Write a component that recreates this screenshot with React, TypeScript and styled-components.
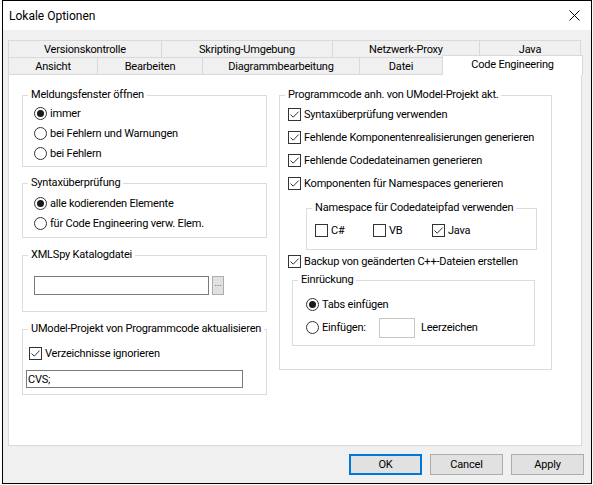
import React from "react";
import styled, { createGlobalStyle, css } from "styled-components";

const FONT = `Roboto, "Liberation Sans", Arial, sans-serif`;

const GlobalStyle = createGlobalStyle`
  html, body {
    margin: 0;
    padding: 0;
    background: #ffffff;
  }
  body {
    font-family: ${FONT};
    font-size: 11px;
    letter-spacing: -0.2px;
    color: #000000;
  }
  * {
    box-sizing: border-box;
  }
`;

const Screen = styled.div`
  width: 593px;
  height: 485px;
  padding-left: 2px;
`;

const Dialog = styled.div`
  width: 590px;
  height: 484px;
  border: 1px solid #000000;
  background: #f0f0f0;
  display: flex;
  flex-direction: column;
`;

const TitleBar = styled.div`
  height: 29px;
  flex: none;
  background: #ffffff;
  display: flex;
  align-items: center;
  justify-content: space-between;
  padding-left: 6px;
`;

const TitleText = styled.span`
  font-size: 12px;
  letter-spacing: 0;
`;

const CloseButton = styled.div`
  width: 34px;
  height: 29px;
  display: flex;
  align-items: center;
  justify-content: center;
`;

const Body = styled.div`
  flex: 1;
  display: flex;
  flex-direction: column;
  padding: 10px 7px 0 5px;
`;

const TabRow = styled.div`
  display: flex;
  align-items: flex-start;
  height: 17px;
`;

const Tab = styled.div<{ $w: number; $active?: boolean }>`
  width: ${(p) => p.$w}px;
  height: 17px;
  flex: none;
  margin-left: -1px;
  &:first-child {
    margin-left: 0;
  }
  border: 1px solid #d9d9d9;
  border-bottom: none;
  background: #f0f0f0;
  display: flex;
  align-items: center;
  justify-content: center;
  white-space: nowrap;
  ${(p) =>
    p.$active &&
    css`
      height: 20px;
      margin-top: -2px;
      margin-bottom: -1px;
      background: #ffffff;
      position: relative;
      z-index: 1;
      padding-bottom: 2px;
    `}
`;

const Panel = styled.div`
  width: 574px;
  height: 372px;
  flex: none;
  background: #ffffff;
  border: 1px solid #d9d9d9;
  display: grid;
  grid-template-columns: 245px 273px;
  column-gap: 12px;
  align-items: start;
  padding: 13px 0 0 13px;
`;

const Column = styled.div`
  display: flex;
  flex-direction: column;
`;

const GroupBox = styled.fieldset<{ $mt?: number; $ml?: number; $mr?: number }>`
  margin: ${(p) => p.$mt ?? 0}px ${(p) => p.$mr ?? 0}px 0 ${(p) => p.$ml ?? 0}px;
  padding: 0;
  min-width: 0;
  border: 1px solid #dcdcdc;
`;

const GroupTitle = styled.legend`
  margin-left: 5px;
  padding: 0 3px;
  height: 14px;
  line-height: 14px;
  white-space: nowrap;
`;

const GroupBody = styled.div<{ $pad: string }>`
  padding: ${(p) => p.$pad};
`;

const OptionRow = styled.label<{ $h?: number; $w?: number; $indent?: number }>`
  display: flex;
  align-items: center;
  gap: 3px;
  height: ${(p) => p.$h ?? 20}px;
  ${(p) => (p.$w ? `width: ${p.$w}px; flex: none;` : "")}
  margin-left: ${(p) => p.$indent ?? 0}px;
  white-space: nowrap;
`;

const InlineOptions = styled.div`
  display: flex;
`;

const Box = styled.span`
  width: 13px;
  height: 13px;
  flex: none;
  border: 1px solid #333333;
  background: #ffffff;
  display: inline-flex;
  align-items: center;
  justify-content: center;
`;

const Circle = styled.span<{ $on: boolean }>`
  width: 13px;
  height: 13px;
  flex: none;
  border-radius: 50%;
  border: 1px solid #333333;
  background: #ffffff;
  display: inline-flex;
  align-items: center;
  justify-content: center;
  &::after {
    content: "";
    width: 7px;
    height: 7px;
    border-radius: 50%;
    background: ${(p) => (p.$on ? "#1a1a1a" : "transparent")};
  }
`;

const TextField = styled.div<{ $w: number; $h?: number; $light?: boolean }>`
  width: ${(p) => p.$w}px;
  height: ${(p) => p.$h ?? 19}px;
  flex: none;
  background: #ffffff;
  border: 1px solid ${(p) => (p.$light ? "#c6c6c6" : "#7a7a7a")};
  padding-left: 1px;
  display: flex;
  align-items: center;
  white-space: nowrap;
`;

const FieldRow = styled.div<{ $mt?: number; $gap?: number }>`
  display: flex;
  align-items: center;
  gap: ${(p) => p.$gap ?? 0}px;
  margin-top: ${(p) => p.$mt ?? 0}px;
`;

const BrowseButton = styled.div`
  width: 12px;
  height: 19px;
  flex: none;
  background: #e1e1e1;
  border: 1px solid #adadad;
  font-size: 9px;
  letter-spacing: 0;
  line-height: 13px;
  text-align: center;
  color: #333333;
`;

const FixedLabel = styled.span<{ $w: number }>`
  width: ${(p) => p.$w}px;
  flex: none;
`;

const TrailingLabel = styled.span`
  margin-left: 6px;
`;

const ButtonBar = styled.div`
  display: flex;
  justify-content: flex-end;
  gap: 8px;
  margin-top: 8px;
`;

const DialogButton = styled.button<{ $default?: boolean }>`
  width: 73px;
  height: 21px;
  padding: 0;
  font: inherit;
  letter-spacing: inherit;
  color: #000000;
  background: #e1e1e1;
  border: 1px solid #adadad;
  ${(p) =>
    p.$default &&
    css`
      border: 2px solid #0078d7;
    `}
`;

const Checkbox: React.FC<{ checked?: boolean; label: string; h?: number; w?: number; indent?: number }> = ({
  checked,
  label,
  h,
  w,
  indent,
}) => (
  <OptionRow $h={h} $w={w} $indent={indent}>
    <Box>
      {checked && (
        <svg width="11" height="11" viewBox="0 0 11 11">
          <path d="M1.5 5.5 L4.2 8.2 L9.6 2.6" fill="none" stroke="#333333" strokeWidth="1" />
        </svg>
      )}
    </Box>
    <span>{label}</span>
  </OptionRow>
);

const Radio: React.FC<{ on?: boolean; label: string; h?: number }> = ({ on = false, label, h }) => (
  <OptionRow $h={h}>
    <Circle $on={on} />
    <span>{label}</span>
  </OptionRow>
);

const backTabs = [
  { label: "Versionskontrolle", w: 154 },
  { label: "Skripting-Umgebung", w: 172 },
  { label: "Netzwerk-Proxy", w: 148 },
  { label: "Java", w: 102 },
];

const frontTabs = [
  { label: "Ansicht", w: 90 },
  { label: "Bearbeiten", w: 106 },
  { label: "Diagrammbearbeitung", w: 158 },
  { label: "Datei", w: 84 },
];

const codeOptions = [
  "Syntaxüberprüfung verwenden",
  "Fehlende Komponentenrealisierungen generieren",
  "Fehlende Codedateinamen generieren",
  "Komponenten für Namespaces generieren",
];

export default function App() {
  return (
    <Screen>
      <GlobalStyle />
      <Dialog>
        <TitleBar>
          <TitleText>Lokale Optionen</TitleText>
          <CloseButton>
            <svg width="11" height="11" viewBox="0 0 11 11">
              <path d="M0.5 0.5 L10.5 10.5 M10.5 0.5 L0.5 10.5" stroke="#000000" strokeWidth="1" />
            </svg>
          </CloseButton>
        </TitleBar>
        <Body>
          <TabRow>
            {backTabs.map((t) => (
              <Tab key={t.label} $w={t.w}>
                {t.label}
              </Tab>
            ))}
          </TabRow>
          <TabRow>
            {frontTabs.map((t) => (
              <Tab key={t.label} $w={t.w}>
                {t.label}
              </Tab>
            ))}
            <Tab $w={141} $active>
              Code Engineering
            </Tab>
          </TabRow>
          <Panel>
            <Column>
              <GroupBox>
                <GroupTitle>Meldungsfenster öffnen</GroupTitle>
                <GroupBody $pad="1px 0 3px 11px">
                  <Radio on label="immer" />
                  <Radio label="bei Fehlern und Warnungen" />
                  <Radio label="bei Fehlern" />
                </GroupBody>
              </GroupBox>
              <GroupBox $mt={9}>
                <GroupTitle>Syntaxüberprüfung</GroupTitle>
                <GroupBody $pad="3px 0 4px 11px">
                  <Radio on label="alle kodierenden Elemente" />
                  <Radio label="für Code Engineering verw. Elem." />
                </GroupBody>
              </GroupBox>
              <GroupBox $mt={10}>
                <GroupTitle>XMLSpy Katalogdatei</GroupTitle>
                <GroupBody $pad="14px 0 16px 11px">
                  <FieldRow $gap={3}>
                    <TextField $w={175} />
                    <BrowseButton>...</BrowseButton>
                  </FieldRow>
                </GroupBody>
              </GroupBox>
              <GroupBox $mt={10}>
                <GroupTitle>UModel-Projekt von Programmcode aktualisieren</GroupTitle>
                <GroupBody $pad="7px 0 6px 3px">
                  <Checkbox checked label="Verzeichnisse ignorieren" indent={3} />
                  <FieldRow $mt={7}>
                    <TextField $w={217} $h={18}>
                      CVS;
                    </TextField>
                  </FieldRow>
                </GroupBody>
              </GroupBox>
            </Column>
            <Column>
              <GroupBox>
                <GroupTitle>Programmcode anh. von UModel-Projekt akt.</GroupTitle>
                <GroupBody $pad="1px 0 23px 8px">
                  {codeOptions.map((o) => (
                    <Checkbox key={o} checked label={o} h={23} />
                  ))}
                  <GroupBox $mt={6} $ml={18} $mr={14}>
                    <GroupTitle>Namespace für Codedateipfad verwenden</GroupTitle>
                    <GroupBody $pad="5px 0 9px 8px">
                      <InlineOptions>
                        <Checkbox label="C#" w={58} />
                        <Checkbox label="VB" w={59} />
                        <Checkbox checked label="Java" />
                      </InlineOptions>
                    </GroupBody>
                  </GroupBox>
                  <Checkbox checked label="Backup von geänderten C++-Dateien erstellen" h={23} />
                  <GroupBox $ml={4} $mr={16}>
                    <GroupTitle>Einrückung</GroupTitle>
                    <GroupBody $pad="6px 0 6px 13px">
                      <Radio on label="Tabs einfügen" h={23} />
                      <FieldRow>
                        <OptionRow $h={23}>
                          <Circle $on={false} />
                          <FixedLabel $w={57}>Einfügen:</FixedLabel>
                        </OptionRow>
                        <TextField $w={36} $h={20} $light />
                        <TrailingLabel>Leerzeichen</TrailingLabel>
                      </FieldRow>
                    </GroupBody>
                  </GroupBox>
                </GroupBody>
              </GroupBox>
            </Column>
          </Panel>
          <ButtonBar>
            <DialogButton $default>OK</DialogButton>
            <DialogButton>Cancel</DialogButton>
            <DialogButton>Apply</DialogButton>
          </ButtonBar>
        </Body>
      </Dialog>
    </Screen>
  );
}
